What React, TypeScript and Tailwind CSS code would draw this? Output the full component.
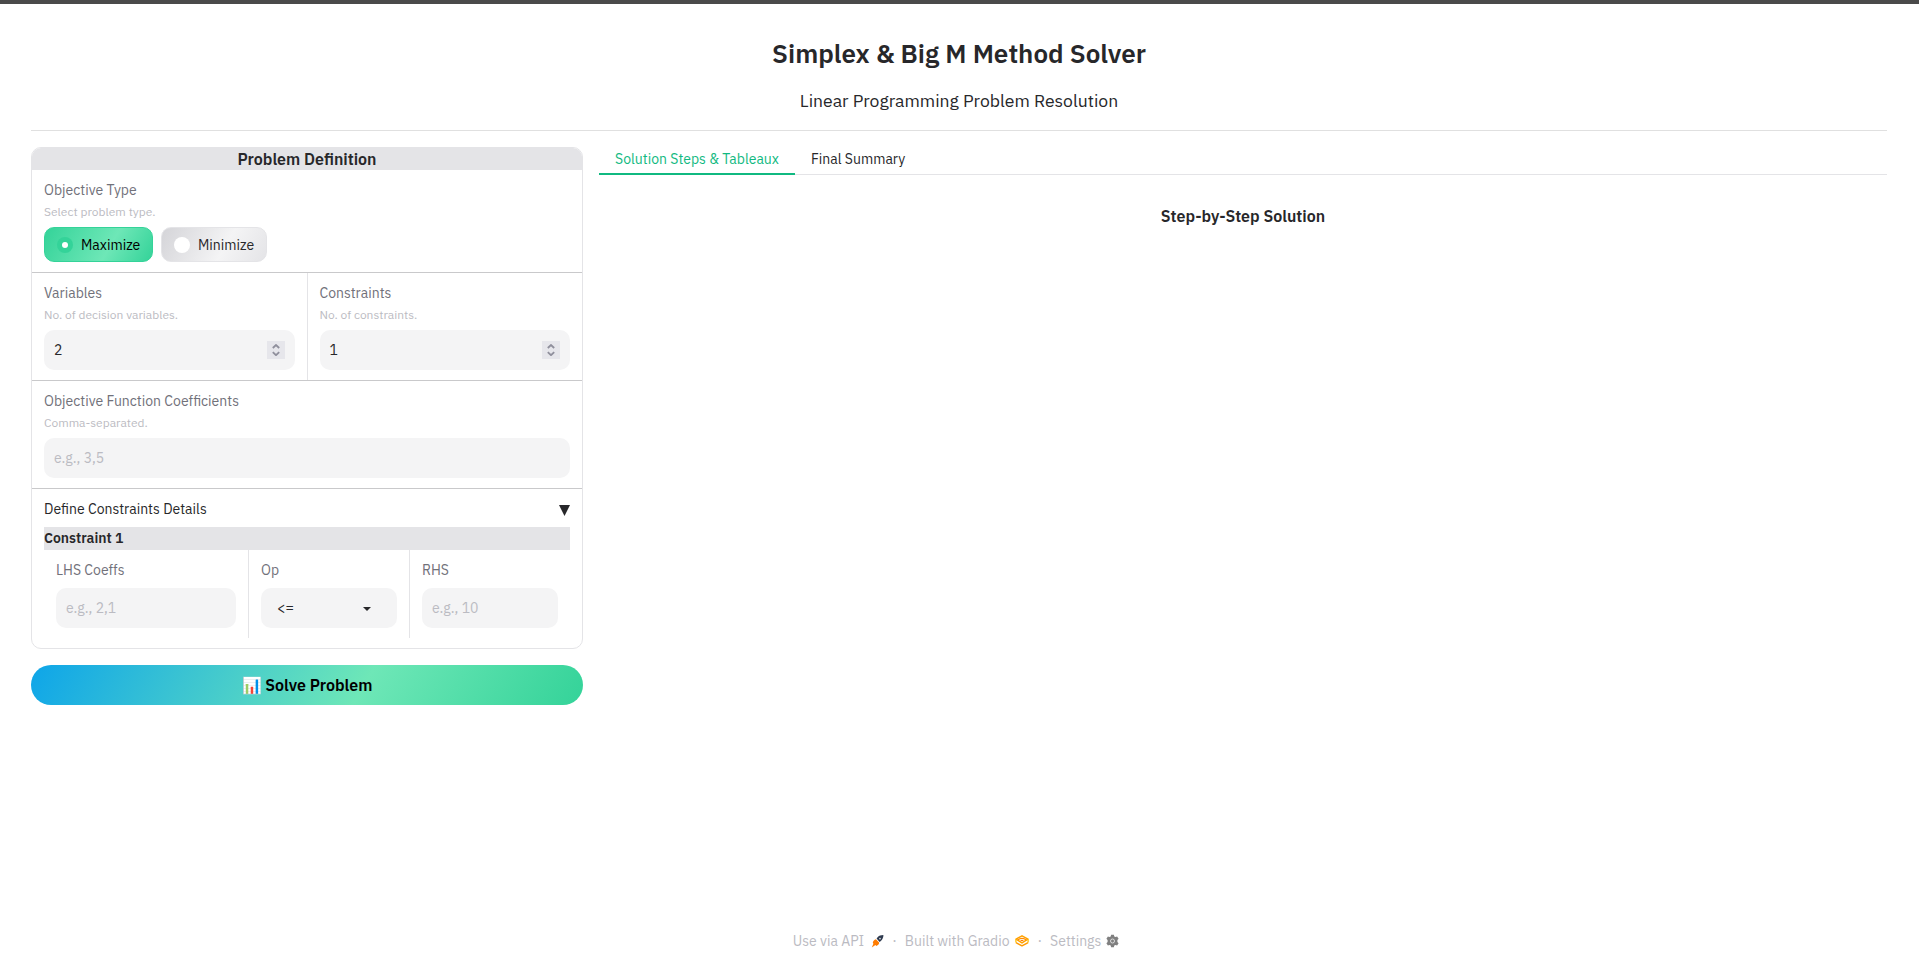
import type { ReactNode } from "react";

function Label({ children }: { children: ReactNode }) {
  return <div className="h-[21px] text-sm leading-[21px] text-[#71717a]">{children}</div>;
}

function Info({ children }: { children: ReactNode }) {
  return <div className="mt-0.5 h-[18px] text-xs leading-[18px] text-[#bbbbc2]">{children}</div>;
}

function Placeholder({ children }: { children: ReactNode }) {
  return (
    <div className="flex h-10 items-center rounded-[10px] bg-[#f4f4f5] px-2.5 text-sm text-[#bbbbc2]">
      {children}
    </div>
  );
}

function NumberField({ label, info, value }: { label: string; info: string; value: string }) {
  return (
    <div className="h-[107px] flex-1 px-3 pt-2.5">
      <Label>{label}</Label>
      <Info>{info}</Info>
      <div className="mt-1.5 flex h-10 items-center justify-between rounded-[10px] bg-[#f4f4f5] px-2.5 text-sm text-[#27272a]">
        <span>{value}</span>
        <span className="flex h-[18px] w-[18px] items-center justify-center bg-[#e6e6eb]">
          <svg width="8" height="12" viewBox="0 0 8 12" fill="none" stroke="#8f8f9c" strokeWidth="1.8">
            <path d="M0.8 4 L4 1 L7.2 4 M0.8 8.2 L4 11.2 L7.2 8.2" />
          </svg>
        </span>
      </div>
    </div>
  );
}

function Rocket() {
  return (
    <svg className="mb-px" width="13" height="14" viewBox="0 0 13 14">
      <path d="M12.4 1 C10 1 7.8 1.8 6.4 3.4 L5.6 4.6 L8.6 7.9 L9.8 7 C11.6 5.6 12.4 3.4 12.4 1Z" fill="#2f3a4f" />
      <path d="M4.9 5.2 L8.1 8.6 C8.5 10 7 11.6 5.4 11.9 L4.4 11 L0.8 13.4 L2.4 9.8 L1.8 8.8 C2 7 3.4 5.4 4.9 5.2Z" fill="#ff7c00" />
      <circle cx="9" cy="4.6" r="0.9" fill="#d5d8de" />
    </svg>
  );
}

function GradioMark() {
  return (
    <svg className="mb-px" width="14" height="14" viewBox="0 0 14 14" fill="none" strokeLinejoin="round">
      <path d="M0.9 8.6 L7 11.8 L13.1 8.6" stroke="#ff9a00" strokeWidth="1.5" />
      <path d="M7 1.8 L13 5.2 L7 8.9 L1 5.2Z" stroke="#ffa200" strokeWidth="1.5" />
      <path d="M0.9 5.2 V8.6 M13.1 5.2 V8.6" stroke="#ffc107" strokeWidth="1.3" />
      <path d="M3 6 C5 3.9 9 3.9 11 6" stroke="#ff8a00" strokeWidth="1.3" />
      <path d="M5.6 6.5 H8.4" stroke="#ff7c00" strokeWidth="1.2" />
    </svg>
  );
}

function Gear() {
  return (
    <svg className="mb-px" width="13" height="14" viewBox="0 0 13 14" fill="#808080">
      <path d="M5.1 0.7 H7.9 L8.3 2.4 L9.4 2.9 L11.1 2.4 L12.6 4.7 L11.4 6 V8 L12.6 9.3 L11.1 11.6 L9.4 11.1 L8.3 11.6 L7.9 13.3 H5.1 L4.7 11.6 L3.6 11.1 L1.9 11.6 L0.4 9.3 L1.6 8 V6 L0.4 4.7 L1.9 2.4 L3.6 2.9 L4.7 2.4Z" />
      <circle cx="6.5" cy="7" r="2" fill="#808080" stroke="#dcdcdc" strokeWidth="1" />
    </svg>
  );
}

export default function App() {
  return (
    <div className="flex h-[967px] flex-col border-t-4 border-[#4a4a4a] bg-white font-['IBM_Plex_Sans',Roboto,sans-serif] text-[#27272a]">
      <header className="mr-8 ml-[31px] flex h-[127px] flex-col items-center border-b border-[#e0e0e0] pt-8">
        <h1 className="h-[34px] text-[26px] leading-[34px] font-semibold">Simplex &amp; Big M Method Solver</h1>
        <p className="mt-[18px] h-[26px] text-[17.6px] leading-[26px]">Linear Programming Problem Resolution</p>
      </header>

      <main className="flex flex-1 gap-4 pt-4 pr-8 pl-[31px]">
        <div className="flex w-[552px] flex-col gap-4">
          <section className="overflow-hidden rounded-[10px] border border-[#e4e4e7]">
            <h2 className="h-[22px] bg-[#e4e4e7] text-center text-base leading-[22px] font-semibold">
              Problem Definition
            </h2>

            <div className="border-b border-[#c9c9cb] px-3 py-2.5">
              <Label>Objective Type</Label>
              <Info>Select problem type.</Info>
              <div className="mt-1.5 flex gap-2 text-sm">
                <div className="flex h-[35px] w-[109px] items-center gap-2 rounded-[10px] border border-[#34d399] bg-[linear-gradient(120deg,#34d399_0%,#6ee7b7_60%,#34d399_100%)] pl-3 text-black">
                  <span className="flex size-4 items-center justify-center rounded-full bg-[#34d399]">
                    <span className="size-1.5 rounded-full bg-white" />
                  </span>
                  Maximize
                </div>
                <div className="flex h-[35px] w-[106px] items-center gap-2 rounded-[10px] border border-[#e4e4e7] bg-[linear-gradient(120deg,#d4d4d8_0%,#f4f4f5_60%,#e4e4e7_100%)] pl-3">
                  <span className="size-4 rounded-full bg-white" />
                  Minimize
                </div>
              </div>
            </div>

            <div className="flex divide-x divide-[#e4e4e7] border-b border-[#c9c9cb]">
              <NumberField label="Variables" info="No. of decision variables." value="2" />
              <NumberField label="Constraints" info="No. of constraints." value="1" />
            </div>

            <div className="border-b border-[#c9c9cb] px-3 py-2.5">
              <Label>Objective Function Coefficients</Label>
              <Info>Comma-separated.</Info>
              <div className="mt-1.5">
                <Placeholder>e.g., 3,5</Placeholder>
              </div>
            </div>

            <div className="px-3 py-2.5">
              <div className="flex h-[21px] items-center justify-between text-sm leading-[21px]">
                <span>Define Constraints Details</span>
                <svg className="mt-px" width="11" height="11" viewBox="0 0 11 11" fill="#27272a">
                  <path d="M0 0 H11 L5.5 11Z" />
                </svg>
              </div>
              <h3 className="mt-[7px] h-[23px] bg-[#e4e4e7] text-sm leading-[22px] font-semibold">Constraint 1</h3>
              <div className="flex h-[88px] divide-x divide-[#e4e4e7]">
                <div className="w-[205px] px-3 pt-2.5">
                  <Label>LHS Coeffs</Label>
                  <div className="mt-[7px]">
                    <Placeholder>e.g., 2,1</Placeholder>
                  </div>
                </div>
                <div className="w-[161px] px-3 pt-2.5">
                  <Label>Op</Label>
                  <div className="mt-[7px] flex h-10 items-center justify-between rounded-[10px] bg-[#f4f4f5] pr-[26px] pl-4 text-sm">
                    <span>&lt;=</span>
                    <svg className="mt-px" width="8" height="4" viewBox="0 0 8 4" fill="#27272a">
                      <path d="M0 0 H8 L4 4Z" />
                    </svg>
                  </div>
                </div>
                <div className="flex-1 px-3 pt-2.5">
                  <Label>RHS</Label>
                  <div className="mt-[7px]">
                    <Placeholder>e.g., 10</Placeholder>
                  </div>
                </div>
              </div>
            </div>
          </section>

          <button className="h-10 rounded-full bg-[linear-gradient(120deg,#0ea5e9_0%,#6ee7b7_60%,#34d399_100%)] text-base font-semibold text-black">
            📊 Solve Problem
          </button>
        </div>

        <div className="flex-1">
          <nav className="flex h-7 border-b border-[#e4e4e7] text-sm leading-6">
            <div className="h-7 w-[196px] border-b-2 border-[#10b981] text-center text-[#10b981]">
              Solution Steps &amp; Tableaux
            </div>
            <div className="px-4">Final Summary</div>
          </nav>
          <h2 className="mt-[29px] text-center text-base leading-6 font-semibold">Step-by-Step Solution</h2>
        </div>
      </main>

      <footer className="flex h-9 items-start justify-center pr-[7px] text-sm leading-[21px] text-[#bbbbc2]">
        <span className="flex items-center gap-[7px]">
          Use via API <Rocket />
        </span>
        <span className="mx-2">·</span>
        <span className="flex items-center gap-[5px]">
          Built with Gradio <GradioMark />
        </span>
        <span className="mr-2 ml-[9px]">·</span>
        <span className="flex items-center gap-[5px]">
          Settings <Gear />
        </span>
      </footer>
    </div>
  );
}
